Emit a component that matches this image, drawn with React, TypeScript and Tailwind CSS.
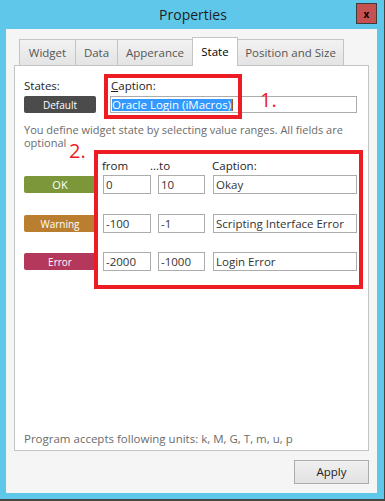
import React from 'react';

const tabs = [
  { label: 'Widget', w: 'w-[57px]' },
  { label: 'Data', w: 'w-[43px]' },
  { label: 'Apperance', w: 'w-[76px]' },
  { label: 'State', w: 'w-[46px]', active: true },
  { label: 'Position and Size', w: 'w-[107px]' },
];

const rows = [
  { name: 'OK', color: 'bg-[#7b973a]', from: '0', to: '10', caption: 'Okay', mt: 'mt-[1px]', text: 'text-[11px]' },
  { name: 'Warning', color: 'bg-[#b97e2f]', from: '-100', to: '-1', caption: 'Scripting Interface Error', mt: 'mt-[20px]', text: 'text-[10px]' },
  { name: 'Error', color: 'bg-[#b4385b]', from: '-2000', to: '-1000', caption: 'Login Error', mt: 'mt-[19px]', text: 'text-[10px]' },
];

const StateButton: React.FC<{ label: string; color: string; text?: string }> = ({ label, color, text = 'text-[10px]' }) => (
  <div className={`w-[72px] h-[17px] rounded-[2px] ${color} flex items-center justify-center text-white ${text} leading-none`}>
    {label}
  </div>
);

const Field: React.FC<{ value: string; w: string }> = ({ value, w }) => (
  <input
    readOnly
    value={value}
    className={`${w} h-[19px] border border-[#acacac] bg-white px-[2px] text-[11.5px] text-[#333] outline-none`}
  />
);

export default function App() {
  return (
    <div className="relative w-[385px] h-[501px] bg-[#5fc7e9] border-r border-b-2 border-[#454545] font-['Open_Sans','Noto_Sans',sans-serif] overflow-hidden">
      {/* title bar */}
      <div className="grid grid-cols-[1fr_auto_1fr] h-[29px]">
        <div />
        <div className="text-[14px] leading-[29px] text-[#1e1e1e] pl-[2px]">Properties</div>
        <div className="flex justify-end pr-[7px] pt-[3px]">
          <div className="w-[21px] h-[21px] bg-[#c75050] border border-[#3d3d3d] flex items-center justify-center text-[10px] font-bold leading-none text-black">
            x
          </div>
        </div>
      </div>

      {/* client area */}
      <div className="ml-[6px] w-[371px] h-[464px] bg-[#f5f5f5] flex flex-col pt-[8px] px-[8px] pb-[9px]">
        <div className="flex items-end h-[28px] pl-[5px]">
          {tabs.map((t, i) =>
            t.active ? (
              <div
                key={t.label}
                className={`${t.w} h-[29px] -mb-px -ml-px relative z-10 bg-white border border-b-0 border-[#c4c4c4] flex items-center justify-center text-[11.5px] text-black`}
              >
                {t.label}
              </div>
            ) : (
              <div
                key={t.label}
                className={`${t.w} h-[26px] ${i > 0 ? '-ml-px' : ''} bg-gradient-to-b from-[#f2f2f2] to-[#e4e4e4] border border-b-0 border-[#c4c4c4] flex items-center justify-center text-[11.5px] text-[#555]`}
              >
                {t.label}
              </div>
            )
          )}
        </div>

        <div className="flex-1 bg-white border border-[#c4c4c4] flex flex-col pl-[9px] pt-[12px] pb-[3px] text-[11.5px]">
          {/* states + caption */}
          <div className="flex">
            <div className="w-[72px] flex flex-col">
              <div className="leading-[16px] text-[#1e1e1e]">States:</div>
              <div className="mt-[2px]">
                <StateButton label="Default" color="bg-[#4b4b4b]" />
              </div>
            </div>
            <div className="ml-[14px] flex flex-col">
              <div className="leading-[16px] text-[#1e1e1e] pl-[1px]">
                <span className="underline">C</span>aption:
              </div>
              <div className="mt-[2px] w-[247px] h-[17px] border border-[#acacac] bg-white flex items-center pl-[1px]">
                <span className="bg-[#3399ff] text-white leading-[12px] pr-[1px]">Oracle Login (iMacros)</span>
                <span className="w-px h-[12px] bg-[#8a5a2a]" />
              </div>
            </div>
          </div>

          <p className="mt-[10px] text-[11px] leading-[13px] text-[#6b6b6b] whitespace-nowrap">
            You define widget state by selecting value ranges. All fields are
            <br />
            optional
          </p>

          {/* range header */}
          <div className="mt-[9px] flex leading-[16px] text-[#1e1e1e]">
            <span className="ml-[78px] w-[48px]">from</span>
            <span className="w-[62px]">...to</span>
            <span>Caption:</span>
          </div>

          {rows.map(r => (
            <div key={r.name} className={`${r.mt} flex items-center`}>
              <StateButton label={r.name} color={r.color} text={r.text} />
              <div className="ml-[7px]">
                <Field value={r.from} w="w-[48px]" />
              </div>
              <div className="ml-[7px]">
                <Field value={r.to} w="w-[47px]" />
              </div>
              <div className="ml-[8px]">
                <Field value={r.caption} w="w-[144px]" />
              </div>
            </div>
          ))}

          <div className="flex-1" />
          <div className="leading-[16px] text-[#6b6b6b]">Program accepts following units: k, M, G, T, m, u, p</div>
        </div>

        <div className="mt-[9px] flex justify-end">
          <button className="w-[75px] h-[24px] border border-[#acacac] bg-gradient-to-b from-[#f0f0f0] to-[#e2e2e2] text-[11.5px] text-[#222]">
            Apply
          </button>
        </div>
      </div>

      {/* annotations */}
      <div className="absolute left-[104px] top-[74px] w-[138px] h-[45px] border-4 border-[#ed1c24]" />
      <div className="absolute left-[94px] top-[150px] w-[269px] h-[139px] border-4 border-[#ed1c24]" />
      <div className="absolute left-[260px] top-[90px] text-[20px] leading-none text-[#ed1c24]">1.</div>
      <div className="absolute left-[69px] top-[141px] text-[20px] leading-none text-[#ed1c24]">2.</div>
    </div>
  );
}
